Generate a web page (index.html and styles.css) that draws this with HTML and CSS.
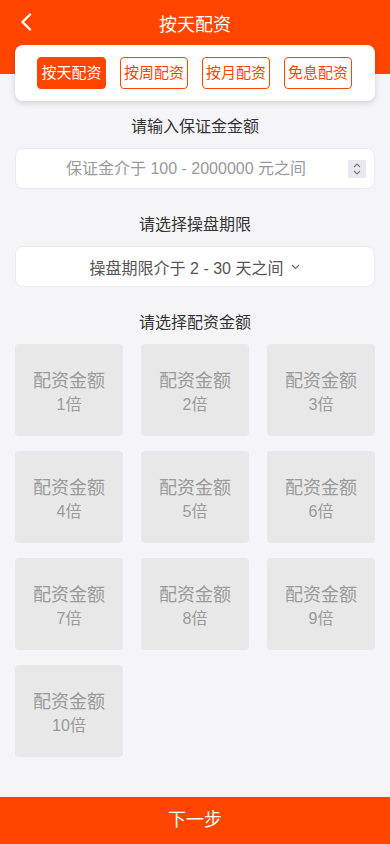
FILE: index.html
```html
<!DOCTYPE html>
<html>
	<head>
		<meta charset="UTF-8">
		<meta name="viewport" content="width=device-width,initial-scale=1,minimum-scale=1,maximum-scale=1,user-scalable=no" />
		<title>按天配资</title>
		<link rel="stylesheet" href="styles.css">
	</head>
	<body>
		<div class="header">
			<a class="back">
				<svg width="12" height="18" viewBox="0 0 12 18"><path d="M10 1.5 L2.5 9 L10 16.5" fill="none" stroke="#fff" stroke-width="2.4" stroke-linecap="round" stroke-linejoin="round"/></svg>
			</a>
			<div class="title">按天配资</div>
		</div>

		<div class="tabs-wrap">
			<div class="tabs">
				<div class="tab active">按天配资</div>
				<div class="tab">按周配资</div>
				<div class="tab">按月配资</div>
				<div class="tab">免息配资</div>
			</div>
		</div>

		<div class="main">
			<div class="label">请输入保证金金额</div>
			<div class="field">
				<input class="input" type="text" placeholder="保证金介于 100 - 2000000 元之间">
				<span class="spin">
					<svg width="10" height="14" viewBox="0 0 10 14"><path d="M2 5 L5 2 L8 5 M2 9 L5 12 L8 9" fill="none" stroke="#777" stroke-width="1.1"/></svg>
				</span>
			</div>

			<div class="label">请选择操盘期限</div>
			<div class="field select">
				<span>操盘期限介于 2 - 30 天之间</span>
				<svg width="9" height="6" viewBox="0 0 9 6"><path d="M1 1 L4.5 4.5 L8 1" fill="none" stroke="#666" stroke-width="1.1"/></svg>
			</div>

			<div class="label">请选择配资金额</div>
			<div class="grid">
				<div class="cell"><p>配资金额</p><p>1倍</p></div>
				<div class="cell"><p>配资金额</p><p>2倍</p></div>
				<div class="cell"><p>配资金额</p><p>3倍</p></div>
				<div class="cell"><p>配资金额</p><p>4倍</p></div>
				<div class="cell"><p>配资金额</p><p>5倍</p></div>
				<div class="cell"><p>配资金额</p><p>6倍</p></div>
				<div class="cell"><p>配资金额</p><p>7倍</p></div>
				<div class="cell"><p>配资金额</p><p>8倍</p></div>
				<div class="cell"><p>配资金额</p><p>9倍</p></div>
				<div class="cell"><p>配资金额</p><p>10倍</p></div>
			</div>
		</div>

		<div class="next">下一步</div>
	</body>
</html>
```

FILE: styles.css
```css
* {
	margin: 0;
	padding: 0;
	box-sizing: border-box;
}

body {
	background: #f5f5f9;
	font-family: "Liberation Sans", "Noto Sans CJK SC", sans-serif;
	min-height: 100vh;
	display: flex;
	flex-direction: column;
}

.header {
	height: 45px;
	background: #ff4500;
	display: flex;
	align-items: center;
	justify-content: center;
	position: relative;
}

.header .back {
	position: absolute;
	left: 20px;
	top: 13px;
	display: flex;
}

.header .title {
	color: #FFFFFF;
	font-size: 18px;
}

.tabs-wrap {
	padding: 0 15px;
	background: linear-gradient(#ff4500 29px, transparent 29px);
}

.tabs {
	height: 56px;
	background: #FFFFFF;
	border-radius: 8px;
	box-shadow: 0 2px 6px rgba(0, 0, 0, 0.15);
	display: flex;
	align-items: center;
	gap: 14px;
	padding: 0 22px;
}

.tab {
	width: 68px;
	height: 32px;
	line-height: 30px;
	border: 1px solid #ff4500;
	border-radius: 4px;
	color: #ff4500;
	font-size: 15px;
	text-align: center;
}

.tab.active {
	width: 69px;
	background: #ff4500;
	color: #FFFFFF;
}

.main {
	flex: 1;
	padding: 0 15px 40px;
}

.label {
	margin-top: 25px;
	margin-bottom: 10px;
	height: 22px;
	line-height: 22px;
	text-align: center;
	font-size: 16px;
	color: #333;
}

.main .label:first-child {
	margin-top: 15px;
}

.field {
	height: 41px;
	background: #FFFFFF;
	border: 1px solid #ebebef;
	border-radius: 8px;
	display: flex;
	align-items: center;
}

.input {
	flex: 1;
	min-width: 0;
	height: 100%;
	border: none;
	outline: none;
	background: transparent;
	padding-left: 8px;
	font-family: inherit;
	font-size: 16px;
	text-align: center;
	color: #333;
}

.input::placeholder {
	color: #999;
}

.spin {
	width: 18px;
	height: 18px;
	margin-right: 8px;
	background: #e8e8ee;
	display: flex;
	align-items: center;
	justify-content: center;
}

.select {
	justify-content: center;
	gap: 8px;
	font-size: 16px;
	color: #555;
}

.select svg {
	margin-top: 1px;
}

.grid {
	display: grid;
	grid-template-columns: repeat(3, 1fr);
	gap: 15px 18px;
}

.cell {
	height: 92px;
	padding-top: 5px;
	background: #e8e8e8;
	border-radius: 4px;
	display: flex;
	flex-direction: column;
	align-items: center;
	justify-content: center;
	color: #9a9a9a;
}

.cell p {
	line-height: 24px;
	font-size: 18px;
}

.cell p + p {
	font-size: 16px;
}

.next {
	height: 47px;
	line-height: 47px;
	background: #ff4500;
	color: #FFFFFF;
	font-size: 18px;
	text-align: center;
}
```
